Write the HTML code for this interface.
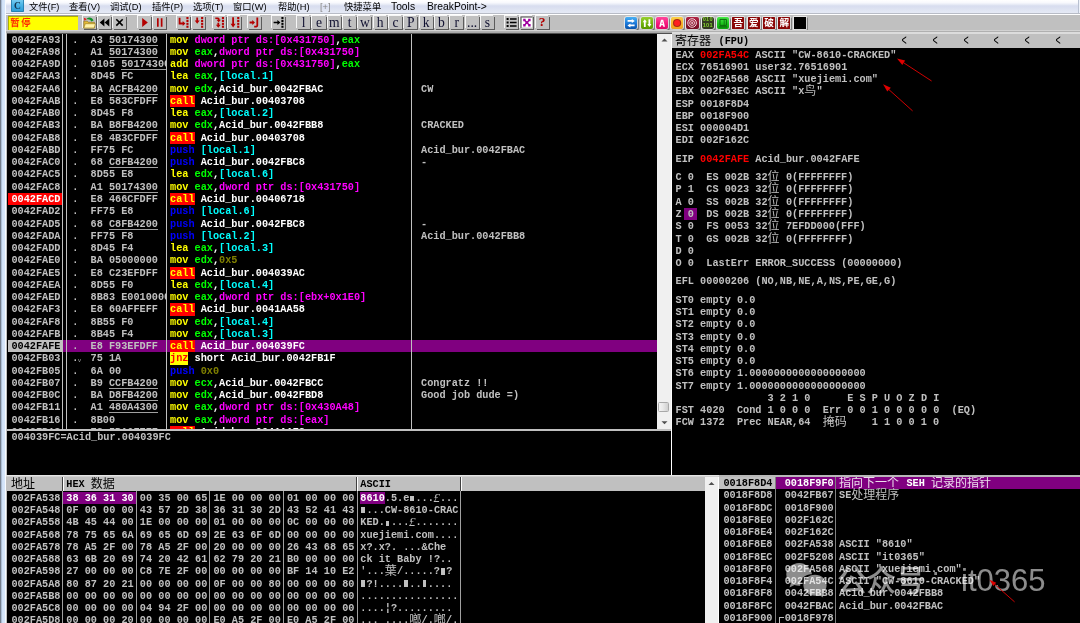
<!DOCTYPE html>
<html><head><meta charset="utf-8"><title>OllyDbg</title>
<style>
html,body{margin:0;padding:0}
body{width:1080px;height:623px;overflow:hidden;background:#c0c0c0;position:relative;font-family:"Liberation Mono","Noto Sans CJK SC",monospace}
#root{position:absolute;left:0;top:0;width:1080px;height:623px;overflow:hidden;will-change:transform;transform:translateZ(0)}
.t{position:absolute;white-space:pre;font:bold 10.22px/12.26px "Liberation Mono","Noto Sans CJK SC",monospace;height:12.26px}
.c{position:absolute;white-space:pre;font:12.02px/12.26px "Liberation Sans","Noto Sans CJK SC",sans-serif;height:12.26px}
.p{position:absolute;white-space:pre;font:italic 13px/12px "Liberation Serif",serif;height:12px;margin-left:-0.3px;margin-top:0px}
.m{position:absolute;white-space:pre;font:9.3px/14px "Liberation Sans","Noto Sans CJK SC",sans-serif;color:#000}
.b{position:absolute;background:#c0c0c0;box-shadow:-1px -1px 0 #f6f6f6, 1px 1px 0 #5c5c5c;overflow:visible}
.i{position:absolute;border-radius:2px;box-shadow:0 0 0 0.8px #f0f0f0, 1.2px 1.2px 0 0.6px #707070;overflow:hidden}
.pane{position:absolute;background:#000;overflow:hidden}
</style></head>
<body>
<div id="root">
<div id="menubar" style="position:absolute;left:0;top:0;width:1080px;height:14px;background:linear-gradient(#ffffff 0%,#f8f9fd 18%,#eaedf7 30%,#dbe0f0 40%,#d8ddef 48%,#dfe4f2 70%,#e7ebf6 100%)"></div>
<div style="position:absolute;left:0;top:13px;width:1080px;height:1px;background:#b8bcc6"></div>
<div style="position:absolute;left:0.00px;top:14.00px;width:1080.00px;height:19.00px;background:#c0c0c0;"></div>
<span class="m" style="left:29px;top:0px;color:#000;">文件(F)</span>
<span class="m" style="left:69px;top:0px;color:#000;">查看(V)</span>
<span class="m" style="left:110px;top:0px;color:#000;">调试(D)</span>
<span class="m" style="left:152px;top:0px;color:#000;">插件(P)</span>
<span class="m" style="left:193px;top:0px;color:#000;">选项(T)</span>
<span class="m" style="left:233px;top:0px;color:#000;">窗口(W)</span>
<span class="m" style="left:278px;top:0px;color:#000;">帮助(H)</span>
<span class="m" style="left:320px;top:0px;color:#888;">[+]</span>
<span class="m" style="left:344px;top:0px;color:#000;">快捷菜单</span>
<span class="m" style="left:391px;top:0px;color:#000;font-size:10.3px;">Tools</span>
<span class="m" style="left:427px;top:0px;color:#000;font-size:10.3px;">BreakPoint-&gt;</span>
<div class="pane" style="left:8px;top:33px;width:650px;height:396px"><span class="t" style="left:3.40px;top:0.60px;color:#c0c0c0;">0042FA93</span><span class="t" style="left:64.13px;top:0.60px;color:#c0c0c0;">.</span><span class="t" style="left:162.00px;top:0.60px;color:#ffff00;">mov </span><span class="t" style="left:186.52px;top:0.60px;color:#ff00ff;">dword ptr ds:[0x431750]</span><span class="t" style="left:327.51px;top:0.60px;color:#ffffff;">,</span><span class="t" style="left:333.64px;top:0.60px;color:#00ff00;">eax</span><span class="t" style="left:3.40px;top:12.86px;color:#c0c0c0;">0042FA98</span><span class="t" style="left:64.13px;top:12.86px;color:#c0c0c0;">.</span><span class="t" style="left:162.00px;top:12.86px;color:#ffff00;">mov </span><span class="t" style="left:186.52px;top:12.86px;color:#00ff00;">eax</span><span class="t" style="left:204.91px;top:12.86px;color:#ffffff;">,</span><span class="t" style="left:211.04px;top:12.86px;color:#ff00ff;">dword ptr ds:[0x431750]</span><span class="t" style="left:3.40px;top:25.12px;color:#c0c0c0;">0042FA9D</span><span class="t" style="left:64.13px;top:25.12px;color:#c0c0c0;">.</span><span class="t" style="left:162.00px;top:25.12px;color:#ffff00;">add </span><span class="t" style="left:186.52px;top:25.12px;color:#ff00ff;">dword ptr ds:[0x431750]</span><span class="t" style="left:327.51px;top:25.12px;color:#ffffff;">,</span><span class="t" style="left:333.64px;top:25.12px;color:#00ff00;">eax</span><span class="t" style="left:3.40px;top:37.38px;color:#c0c0c0;">0042FAA3</span><span class="t" style="left:64.13px;top:37.38px;color:#c0c0c0;">.</span><span class="t" style="left:162.00px;top:37.38px;color:#ffff00;">lea </span><span class="t" style="left:186.52px;top:37.38px;color:#00ff00;">eax</span><span class="t" style="left:204.91px;top:37.38px;color:#ffffff;">,</span><span class="t" style="left:211.04px;top:37.38px;color:#00ffff;">[local.1]</span><span class="t" style="left:3.40px;top:49.64px;color:#c0c0c0;">0042FAA6</span><span class="t" style="left:64.13px;top:49.64px;color:#c0c0c0;">.</span><span class="t" style="left:162.00px;top:49.64px;color:#ffff00;">mov </span><span class="t" style="left:186.52px;top:49.64px;color:#00ff00;">edx</span><span class="t" style="left:204.91px;top:49.64px;color:#ffffff;">,</span><span class="t" style="left:211.04px;top:49.64px;color:#ffffff;">Acid_bur.0042FBAC</span><span class="t" style="left:413.00px;top:49.64px;color:#c0c0c0;">CW</span><span class="t" style="left:3.40px;top:61.90px;color:#c0c0c0;">0042FAAB</span><span class="t" style="left:64.13px;top:61.90px;color:#c0c0c0;">.</span><span class="t" style="left:162.00px;top:61.90px;color:#ffff00;background:#ff0000;">call</span><span class="t" style="left:186.52px;top:61.90px;color:#ffffff;"> Acid_bur.00403708</span><span class="t" style="left:3.40px;top:74.16px;color:#c0c0c0;">0042FAB0</span><span class="t" style="left:64.13px;top:74.16px;color:#c0c0c0;">.</span><span class="t" style="left:162.00px;top:74.16px;color:#ffff00;">lea </span><span class="t" style="left:186.52px;top:74.16px;color:#00ff00;">eax</span><span class="t" style="left:204.91px;top:74.16px;color:#ffffff;">,</span><span class="t" style="left:211.04px;top:74.16px;color:#00ffff;">[local.2]</span><span class="t" style="left:3.40px;top:86.42px;color:#c0c0c0;">0042FAB3</span><span class="t" style="left:64.13px;top:86.42px;color:#c0c0c0;">.</span><span class="t" style="left:162.00px;top:86.42px;color:#ffff00;">mov </span><span class="t" style="left:186.52px;top:86.42px;color:#00ff00;">edx</span><span class="t" style="left:204.91px;top:86.42px;color:#ffffff;">,</span><span class="t" style="left:211.04px;top:86.42px;color:#ffffff;">Acid_bur.0042FBB8</span><span class="t" style="left:413.00px;top:86.42px;color:#c0c0c0;">CRACKED</span><span class="t" style="left:3.40px;top:98.68px;color:#c0c0c0;">0042FAB8</span><span class="t" style="left:64.13px;top:98.68px;color:#c0c0c0;">.</span><span class="t" style="left:162.00px;top:98.68px;color:#ffff00;background:#ff0000;">call</span><span class="t" style="left:186.52px;top:98.68px;color:#ffffff;"> Acid_bur.00403708</span><span class="t" style="left:3.40px;top:110.94px;color:#c0c0c0;">0042FABD</span><span class="t" style="left:64.13px;top:110.94px;color:#c0c0c0;">.</span><span class="t" style="left:162.00px;top:110.94px;color:#0000ff;">push </span><span class="t" style="left:192.65px;top:110.94px;color:#00ffff;">[local.1]</span><span class="t" style="left:413.00px;top:110.94px;color:#c0c0c0;">Acid_bur.0042FBAC</span><span class="t" style="left:3.40px;top:123.20px;color:#c0c0c0;">0042FAC0</span><span class="t" style="left:64.13px;top:123.20px;color:#c0c0c0;">.</span><span class="t" style="left:162.00px;top:123.20px;color:#0000ff;">push </span><span class="t" style="left:192.65px;top:123.20px;color:#ffffff;">Acid_bur.0042FBC8</span><span class="t" style="left:413.00px;top:123.20px;color:#c0c0c0;">-</span><span class="t" style="left:3.40px;top:135.46px;color:#c0c0c0;">0042FAC5</span><span class="t" style="left:64.13px;top:135.46px;color:#c0c0c0;">.</span><span class="t" style="left:162.00px;top:135.46px;color:#ffff00;">lea </span><span class="t" style="left:186.52px;top:135.46px;color:#00ff00;">edx</span><span class="t" style="left:204.91px;top:135.46px;color:#ffffff;">,</span><span class="t" style="left:211.04px;top:135.46px;color:#00ffff;">[local.6]</span><span class="t" style="left:3.40px;top:147.72px;color:#c0c0c0;">0042FAC8</span><span class="t" style="left:64.13px;top:147.72px;color:#c0c0c0;">.</span><span class="t" style="left:162.00px;top:147.72px;color:#ffff00;">mov </span><span class="t" style="left:186.52px;top:147.72px;color:#00ff00;">eax</span><span class="t" style="left:204.91px;top:147.72px;color:#ffffff;">,</span><span class="t" style="left:211.04px;top:147.72px;color:#ff00ff;">dword ptr ds:[0x431750]</span><div style="position:absolute;left:0;top:159.98px;width:54px;height:12.26px;background:#ff0000"></div><span class="t" style="left:3.40px;top:159.98px;color:#fff;">0042FACD</span><span class="t" style="left:64.13px;top:159.98px;color:#c0c0c0;">.</span><span class="t" style="left:162.00px;top:159.98px;color:#ffff00;background:#ff0000;">call</span><span class="t" style="left:186.52px;top:159.98px;color:#ffffff;"> Acid_bur.00406718</span><span class="t" style="left:3.40px;top:172.24px;color:#c0c0c0;">0042FAD2</span><span class="t" style="left:64.13px;top:172.24px;color:#c0c0c0;">.</span><span class="t" style="left:162.00px;top:172.24px;color:#0000ff;">push </span><span class="t" style="left:192.65px;top:172.24px;color:#00ffff;">[local.6]</span><span class="t" style="left:3.40px;top:184.50px;color:#c0c0c0;">0042FAD5</span><span class="t" style="left:64.13px;top:184.50px;color:#c0c0c0;">.</span><span class="t" style="left:162.00px;top:184.50px;color:#0000ff;">push </span><span class="t" style="left:192.65px;top:184.50px;color:#ffffff;">Acid_bur.0042FBC8</span><span class="t" style="left:413.00px;top:184.50px;color:#c0c0c0;">-</span><span class="t" style="left:3.40px;top:196.76px;color:#c0c0c0;">0042FADA</span><span class="t" style="left:64.13px;top:196.76px;color:#c0c0c0;">.</span><span class="t" style="left:162.00px;top:196.76px;color:#0000ff;">push </span><span class="t" style="left:192.65px;top:196.76px;color:#00ffff;">[local.2]</span><span class="t" style="left:413.00px;top:196.76px;color:#c0c0c0;">Acid_bur.0042FBB8</span><span class="t" style="left:3.40px;top:209.02px;color:#c0c0c0;">0042FADD</span><span class="t" style="left:64.13px;top:209.02px;color:#c0c0c0;">.</span><span class="t" style="left:162.00px;top:209.02px;color:#ffff00;">lea </span><span class="t" style="left:186.52px;top:209.02px;color:#00ff00;">eax</span><span class="t" style="left:204.91px;top:209.02px;color:#ffffff;">,</span><span class="t" style="left:211.04px;top:209.02px;color:#00ffff;">[local.3]</span><span class="t" style="left:3.40px;top:221.28px;color:#c0c0c0;">0042FAE0</span><span class="t" style="left:64.13px;top:221.28px;color:#c0c0c0;">.</span><span class="t" style="left:162.00px;top:221.28px;color:#ffff00;">mov </span><span class="t" style="left:186.52px;top:221.28px;color:#00ff00;">edx</span><span class="t" style="left:204.91px;top:221.28px;color:#ffffff;">,</span><span class="t" style="left:211.04px;top:221.28px;color:#808000;">0x5</span><span class="t" style="left:3.40px;top:233.54px;color:#c0c0c0;">0042FAE5</span><span class="t" style="left:64.13px;top:233.54px;color:#c0c0c0;">.</span><span class="t" style="left:162.00px;top:233.54px;color:#ffff00;background:#ff0000;">call</span><span class="t" style="left:186.52px;top:233.54px;color:#ffffff;"> Acid_bur.004039AC</span><span class="t" style="left:3.40px;top:245.80px;color:#c0c0c0;">0042FAEA</span><span class="t" style="left:64.13px;top:245.80px;color:#c0c0c0;">.</span><span class="t" style="left:162.00px;top:245.80px;color:#ffff00;">lea </span><span class="t" style="left:186.52px;top:245.80px;color:#00ff00;">edx</span><span class="t" style="left:204.91px;top:245.80px;color:#ffffff;">,</span><span class="t" style="left:211.04px;top:245.80px;color:#00ffff;">[local.4]</span><span class="t" style="left:3.40px;top:258.06px;color:#c0c0c0;">0042FAED</span><span class="t" style="left:64.13px;top:258.06px;color:#c0c0c0;">.</span><span class="t" style="left:162.00px;top:258.06px;color:#ffff00;">mov </span><span class="t" style="left:186.52px;top:258.06px;color:#00ff00;">eax</span><span class="t" style="left:204.91px;top:258.06px;color:#ffffff;">,</span><span class="t" style="left:211.04px;top:258.06px;color:#ff00ff;">dword ptr ds:[ebx+0x1E0]</span><span class="t" style="left:3.40px;top:270.32px;color:#c0c0c0;">0042FAF3</span><span class="t" style="left:64.13px;top:270.32px;color:#c0c0c0;">.</span><span class="t" style="left:162.00px;top:270.32px;color:#ffff00;background:#ff0000;">call</span><span class="t" style="left:186.52px;top:270.32px;color:#ffffff;"> Acid_bur.0041AA58</span><span class="t" style="left:3.40px;top:282.58px;color:#c0c0c0;">0042FAF8</span><span class="t" style="left:64.13px;top:282.58px;color:#c0c0c0;">.</span><span class="t" style="left:162.00px;top:282.58px;color:#ffff00;">mov </span><span class="t" style="left:186.52px;top:282.58px;color:#00ff00;">edx</span><span class="t" style="left:204.91px;top:282.58px;color:#ffffff;">,</span><span class="t" style="left:211.04px;top:282.58px;color:#00ffff;">[local.4]</span><span class="t" style="left:3.40px;top:294.84px;color:#c0c0c0;">0042FAFB</span><span class="t" style="left:64.13px;top:294.84px;color:#c0c0c0;">.</span><span class="t" style="left:162.00px;top:294.84px;color:#ffff00;">mov </span><span class="t" style="left:186.52px;top:294.84px;color:#00ff00;">eax</span><span class="t" style="left:204.91px;top:294.84px;color:#ffffff;">,</span><span class="t" style="left:211.04px;top:294.84px;color:#00ffff;">[local.3]</span><div style="position:absolute;left:0;top:307.10px;width:54px;height:12.26px;background:#c0c0c0"></div><div style="position:absolute;left:54.5px;top:307.10px;width:596px;height:12.26px;background:#800080"></div><span class="t" style="left:3.40px;top:307.10px;color:#000;">0042FAFE</span><span class="t" style="left:64.13px;top:307.10px;color:#c0c0c0;">.</span><span class="t" style="left:162.00px;top:307.10px;color:#ffff00;background:#ff0000;">call</span><span class="t" style="left:186.52px;top:307.10px;color:#ffffff;"> Acid_bur.004039FC</span><span class="t" style="left:3.40px;top:319.36px;color:#c0c0c0;">0042FB03</span><span class="t" style="left:64.13px;top:319.36px;color:#c0c0c0;">.</span><span style="position:absolute;left:70.00px;top:323.96px;font:6px/7px 'Liberation Sans',sans-serif;color:#a0a0a0">v</span><span class="t" style="left:162.00px;top:319.36px;color:#ff0000;background:#ffff00;">jnz</span><span class="t" style="left:180.39px;top:319.36px;color:#ffffff;"> short Acid_bur.0042FB1F</span><span class="t" style="left:3.40px;top:331.62px;color:#c0c0c0;">0042FB05</span><span class="t" style="left:64.13px;top:331.62px;color:#c0c0c0;">.</span><span class="t" style="left:162.00px;top:331.62px;color:#0000ff;">push </span><span class="t" style="left:192.65px;top:331.62px;color:#808000;">0x0</span><span class="t" style="left:3.40px;top:343.88px;color:#c0c0c0;">0042FB07</span><span class="t" style="left:64.13px;top:343.88px;color:#c0c0c0;">.</span><span class="t" style="left:162.00px;top:343.88px;color:#ffff00;">mov </span><span class="t" style="left:186.52px;top:343.88px;color:#00ff00;">ecx</span><span class="t" style="left:204.91px;top:343.88px;color:#ffffff;">,</span><span class="t" style="left:211.04px;top:343.88px;color:#ffffff;">Acid_bur.0042FBCC</span><span class="t" style="left:413.00px;top:343.88px;color:#c0c0c0;">Congratz !!</span><span class="t" style="left:3.40px;top:356.14px;color:#c0c0c0;">0042FB0C</span><span class="t" style="left:64.13px;top:356.14px;color:#c0c0c0;">.</span><span class="t" style="left:162.00px;top:356.14px;color:#ffff00;">mov </span><span class="t" style="left:186.52px;top:356.14px;color:#00ff00;">edx</span><span class="t" style="left:204.91px;top:356.14px;color:#ffffff;">,</span><span class="t" style="left:211.04px;top:356.14px;color:#ffffff;">Acid_bur.0042FBD8</span><span class="t" style="left:413.00px;top:356.14px;color:#c0c0c0;">Good job dude =)</span><span class="t" style="left:3.40px;top:368.40px;color:#c0c0c0;">0042FB11</span><span class="t" style="left:64.13px;top:368.40px;color:#c0c0c0;">.</span><span class="t" style="left:162.00px;top:368.40px;color:#ffff00;">mov </span><span class="t" style="left:186.52px;top:368.40px;color:#00ff00;">eax</span><span class="t" style="left:204.91px;top:368.40px;color:#ffffff;">,</span><span class="t" style="left:211.04px;top:368.40px;color:#ff00ff;">dword ptr ds:[0x430A48]</span><span class="t" style="left:3.40px;top:380.66px;color:#c0c0c0;">0042FB16</span><span class="t" style="left:64.13px;top:380.66px;color:#c0c0c0;">.</span><span class="t" style="left:162.00px;top:380.66px;color:#ffff00;">mov </span><span class="t" style="left:186.52px;top:380.66px;color:#00ff00;">eax</span><span class="t" style="left:204.91px;top:380.66px;color:#ffffff;">,</span><span class="t" style="left:211.04px;top:380.66px;color:#ff00ff;">dword ptr ds:[eax]</span><span class="t" style="left:3.40px;top:392.92px;color:#c0c0c0;">0042FB18</span><span class="t" style="left:64.13px;top:392.92px;color:#c0c0c0;">.</span><span class="t" style="left:162.00px;top:392.92px;color:#ffff00;background:#ff0000;">call</span><span class="t" style="left:186.52px;top:392.92px;color:#ffffff;"> Acid_bur.0041A178</span><div style="position:absolute;left:0;top:0;width:158.5px;height:396px;overflow:hidden"><span class="t" style="left:82.52px;top:0.60px;color:#c0c0c0;">A3 </span><span class="t" style="left:100.91px;top:0.60px;color:#c0c0c0;border-bottom:1px solid #a0a0a0;height:11.06px">50174300</span><span class="t" style="left:82.52px;top:12.86px;color:#c0c0c0;">A1 </span><span class="t" style="left:100.91px;top:12.86px;color:#c0c0c0;border-bottom:1px solid #a0a0a0;height:11.06px">50174300</span><span class="t" style="left:82.52px;top:25.12px;color:#c0c0c0;">0105 </span><span class="t" style="left:113.17px;top:25.12px;color:#c0c0c0;border-bottom:1px solid #a0a0a0;height:11.06px">50174300</span><span class="t" style="left:82.52px;top:37.38px;color:#c0c0c0;">8D45 FC</span><span class="t" style="left:82.52px;top:49.64px;color:#c0c0c0;">BA </span><span class="t" style="left:100.91px;top:49.64px;color:#c0c0c0;border-bottom:1px solid #a0a0a0;height:11.06px">ACFB4200</span><span class="t" style="left:82.52px;top:61.90px;color:#c0c0c0;">E8 583CFDFF</span><span class="t" style="left:82.52px;top:74.16px;color:#c0c0c0;">8D45 F8</span><span class="t" style="left:82.52px;top:86.42px;color:#c0c0c0;">BA </span><span class="t" style="left:100.91px;top:86.42px;color:#c0c0c0;border-bottom:1px solid #a0a0a0;height:11.06px">B8FB4200</span><span class="t" style="left:82.52px;top:98.68px;color:#c0c0c0;">E8 4B3CFDFF</span><span class="t" style="left:82.52px;top:110.94px;color:#c0c0c0;">FF75 FC</span><span class="t" style="left:82.52px;top:123.20px;color:#c0c0c0;">68 </span><span class="t" style="left:100.91px;top:123.20px;color:#c0c0c0;border-bottom:1px solid #a0a0a0;height:11.06px">C8FB4200</span><span class="t" style="left:82.52px;top:135.46px;color:#c0c0c0;">8D55 E8</span><span class="t" style="left:82.52px;top:147.72px;color:#c0c0c0;">A1 </span><span class="t" style="left:100.91px;top:147.72px;color:#c0c0c0;border-bottom:1px solid #a0a0a0;height:11.06px">50174300</span><span class="t" style="left:82.52px;top:159.98px;color:#c0c0c0;">E8 466CFDFF</span><span class="t" style="left:82.52px;top:172.24px;color:#c0c0c0;">FF75 E8</span><span class="t" style="left:82.52px;top:184.50px;color:#c0c0c0;">68 </span><span class="t" style="left:100.91px;top:184.50px;color:#c0c0c0;border-bottom:1px solid #a0a0a0;height:11.06px">C8FB4200</span><span class="t" style="left:82.52px;top:196.76px;color:#c0c0c0;">FF75 F8</span><span class="t" style="left:82.52px;top:209.02px;color:#c0c0c0;">8D45 F4</span><span class="t" style="left:82.52px;top:221.28px;color:#c0c0c0;">BA 05000000</span><span class="t" style="left:82.52px;top:233.54px;color:#c0c0c0;">E8 C23EFDFF</span><span class="t" style="left:82.52px;top:245.80px;color:#c0c0c0;">8D55 F0</span><span class="t" style="left:82.52px;top:258.06px;color:#c0c0c0;">8B83 E0010000</span><span class="t" style="left:82.52px;top:270.32px;color:#c0c0c0;">E8 60AFFEFF</span><span class="t" style="left:82.52px;top:282.58px;color:#c0c0c0;">8B55 F0</span><span class="t" style="left:82.52px;top:294.84px;color:#c0c0c0;">8B45 F4</span><span class="t" style="left:82.52px;top:307.10px;color:#c0c0c0;">E8 F93EFDFF</span><span class="t" style="left:82.52px;top:319.36px;color:#c0c0c0;">75 1A</span><span class="t" style="left:82.52px;top:331.62px;color:#c0c0c0;">6A 00</span><span class="t" style="left:82.52px;top:343.88px;color:#c0c0c0;">B9 </span><span class="t" style="left:100.91px;top:343.88px;color:#c0c0c0;border-bottom:1px solid #a0a0a0;height:11.06px">CCFB4200</span><span class="t" style="left:82.52px;top:356.14px;color:#c0c0c0;">BA </span><span class="t" style="left:100.91px;top:356.14px;color:#c0c0c0;border-bottom:1px solid #a0a0a0;height:11.06px">D8FB4200</span><span class="t" style="left:82.52px;top:368.40px;color:#c0c0c0;">A1 </span><span class="t" style="left:100.91px;top:368.40px;color:#c0c0c0;border-bottom:1px solid #a0a0a0;height:11.06px">480A4300</span><span class="t" style="left:82.52px;top:380.66px;color:#c0c0c0;">8B00</span><span class="t" style="left:82.52px;top:392.92px;color:#c0c0c0;">E8 5BA6FEFF</span></div><div style="position:absolute;left:54px;top:0;width:1px;height:396px;background:#c0c0c0"></div><div style="position:absolute;left:58px;top:0;width:1px;height:396px;background:#c0c0c0"></div><div style="position:absolute;left:158px;top:0;width:1px;height:396px;background:#c0c0c0"></div><div style="position:absolute;left:403px;top:0;width:1px;height:396px;background:#c0c0c0"></div></div>
<div class="pane" style="left:8px;top:431px;width:663px;height:44px"></div>
<div class="pane" style="left:672px;top:48px;width:408px;height:427px"></div>
<div class="pane" style="left:8px;top:491px;width:697px;height:132px"></div>
<div class="pane" style="left:719px;top:477px;width:361px;height:146px"></div>
<span class="t" style="left:11.40px;top:431.20px;color:#c0c0c0;">004039FC=Acid_bur.004039FC</span>
<div style="position:absolute;left:672.00px;top:34.00px;width:408.00px;height:14.00px;background:#c0c0c0;"></div>
<span class="c" style="left:675px;top:34.5px;color:#000">寄存器</span>
<span class="t" style="left:718.51px;top:35.00px;color:#000;">(FPU)</span>
<span class="t" style="left:901.30px;top:35.40px;color:#000;font-weight:normal;transform:scale(0.85,1.45);transform-origin:50% 55%">&lt;</span>
<span class="t" style="left:931.95px;top:35.40px;color:#000;font-weight:normal;transform:scale(0.85,1.45);transform-origin:50% 55%">&lt;</span>
<span class="t" style="left:962.60px;top:35.40px;color:#000;font-weight:normal;transform:scale(0.85,1.45);transform-origin:50% 55%">&lt;</span>
<span class="t" style="left:993.25px;top:35.40px;color:#000;font-weight:normal;transform:scale(0.85,1.45);transform-origin:50% 55%">&lt;</span>
<span class="t" style="left:1023.90px;top:35.40px;color:#000;font-weight:normal;transform:scale(0.85,1.45);transform-origin:50% 55%">&lt;</span>
<span class="t" style="left:1054.55px;top:35.40px;color:#000;font-weight:normal;transform:scale(0.85,1.45);transform-origin:50% 55%">&lt;</span>
<div style="position:absolute;left:684.20px;top:207.68px;width:12.50px;height:12.26px;background:#800080;"></div>
<span class="t" style="left:675.60px;top:48.60px;color:#c0c0c0;">EAX </span>
<span class="t" style="left:700.12px;top:48.60px;color:#ff0000;">002FA54C</span>
<span class="t" style="left:749.16px;top:48.60px;color:#c0c0c0;"> ASCII "CW-8610-CRACKED"</span>
<span class="t" style="left:675.60px;top:60.86px;color:#c0c0c0;">ECX 76516901 user32.76516901</span>
<span class="t" style="left:675.60px;top:73.12px;color:#c0c0c0;">EDX 002FA568 ASCII "xuejiemi.com"</span>
<span class="t" style="left:675.60px;top:85.38px;color:#c0c0c0;">EBX 002F63EC ASCII "x</span>
<span class="c" style="left:804.33px;top:85.38px;color:#c0c0c0;">鸟</span>
<span class="t" style="left:816.59px;top:85.38px;color:#c0c0c0;">"</span>
<span class="t" style="left:675.60px;top:97.64px;color:#c0c0c0;">ESP 0018F8D4</span>
<span class="t" style="left:675.60px;top:109.90px;color:#c0c0c0;">EBP 0018F900</span>
<span class="t" style="left:675.60px;top:122.16px;color:#c0c0c0;">ESI 000004D1</span>
<span class="t" style="left:675.60px;top:134.42px;color:#c0c0c0;">EDI 002F162C</span>
<span class="t" style="left:675.60px;top:152.81px;color:#c0c0c0;">EIP </span>
<span class="t" style="left:700.12px;top:152.81px;color:#ff0000;">0042FAFE</span>
<span class="t" style="left:749.16px;top:152.81px;color:#c0c0c0;"> Acid_bur.0042FAFE</span>
<span class="t" style="left:675.60px;top:171.20px;color:#c0c0c0;">C 0  ES 002B 32</span>
<span class="c" style="left:767.55px;top:171.20px;color:#c0c0c0;">位</span>
<span class="t" style="left:779.81px;top:171.20px;color:#c0c0c0;"> 0(FFFFFFFF)</span>
<span class="t" style="left:675.60px;top:183.46px;color:#c0c0c0;">P 1  CS 0023 32</span>
<span class="c" style="left:767.55px;top:183.46px;color:#c0c0c0;">位</span>
<span class="t" style="left:779.81px;top:183.46px;color:#c0c0c0;"> 0(FFFFFFFF)</span>
<span class="t" style="left:675.60px;top:195.72px;color:#c0c0c0;">A 0  SS 002B 32</span>
<span class="c" style="left:767.55px;top:195.72px;color:#c0c0c0;">位</span>
<span class="t" style="left:779.81px;top:195.72px;color:#c0c0c0;"> 0(FFFFFFFF)</span>
<span class="t" style="left:675.60px;top:207.98px;color:#c0c0c0;">Z 0  DS 002B 32</span>
<span class="c" style="left:767.55px;top:207.98px;color:#c0c0c0;">位</span>
<span class="t" style="left:779.81px;top:207.98px;color:#c0c0c0;"> 0(FFFFFFFF)</span>
<span class="t" style="left:675.60px;top:220.24px;color:#c0c0c0;">S 0  FS 0053 32</span>
<span class="c" style="left:767.55px;top:220.24px;color:#c0c0c0;">位</span>
<span class="t" style="left:779.81px;top:220.24px;color:#c0c0c0;"> 7EFDD000(FFF)</span>
<span class="t" style="left:675.60px;top:232.50px;color:#c0c0c0;">T 0  GS 002B 32</span>
<span class="c" style="left:767.55px;top:232.50px;color:#c0c0c0;">位</span>
<span class="t" style="left:779.81px;top:232.50px;color:#c0c0c0;"> 0(FFFFFFFF)</span>
<span class="t" style="left:675.60px;top:244.76px;color:#c0c0c0;">D 0</span>
<span class="t" style="left:675.60px;top:257.02px;color:#c0c0c0;">O 0  LastErr ERROR_SUCCESS (00000000)</span>
<span class="t" style="left:675.60px;top:275.41px;color:#c0c0c0;">EFL 00000206 (NO,NB,NE,A,NS,PE,GE,G)</span>
<span class="t" style="left:675.60px;top:293.80px;color:#c0c0c0;">ST0 empty 0.0</span>
<span class="t" style="left:675.60px;top:306.06px;color:#c0c0c0;">ST1 empty 0.0</span>
<span class="t" style="left:675.60px;top:318.32px;color:#c0c0c0;">ST2 empty 0.0</span>
<span class="t" style="left:675.60px;top:330.58px;color:#c0c0c0;">ST3 empty 0.0</span>
<span class="t" style="left:675.60px;top:342.84px;color:#c0c0c0;">ST4 empty 0.0</span>
<span class="t" style="left:675.60px;top:355.10px;color:#c0c0c0;">ST5 empty 0.0</span>
<span class="t" style="left:675.60px;top:367.36px;color:#c0c0c0;">ST6 empty 1.0000000000000000000</span>
<span class="t" style="left:675.60px;top:379.62px;color:#c0c0c0;">ST7 empty 1.0000000000000000000</span>
<span class="t" style="left:675.60px;top:391.88px;color:#c0c0c0;">               3 2 1 0      E S P U O Z D I</span>
<span class="t" style="left:675.60px;top:404.14px;color:#c0c0c0;">FST 4020  Cond 1 0 0 0  Err 0 0 1 0 0 0 0 0  (EQ)</span>
<span class="t" style="left:675.60px;top:416.40px;color:#c0c0c0;">FCW 1372  Prec NEAR,64  </span>
<span class="c" style="left:822.72px;top:416.40px;color:#c0c0c0;">掩码</span>
<span class="t" style="left:847.24px;top:416.40px;color:#c0c0c0;">    1 1 0 0 1 0</span>
<div style="position:absolute;left:8.00px;top:477.00px;width:697.00px;height:14.00px;background:#c0c0c0;"></div>
<span class="c" style="left:11px;top:477.5px;color:#000">地址</span>
<span class="t" style="left:66.30px;top:478.20px;color:#000;">HEX</span>
<span class="c" style="left:90.82px;top:477.5px;color:#000">数据</span>
<span class="t" style="left:360.30px;top:478.20px;color:#000;">ASCII</span>
<div style="position:absolute;left:62.00px;top:477.00px;width:1.00px;height:14.00px;background:#404040;"></div>
<div style="position:absolute;left:63.00px;top:477.00px;width:1.00px;height:14.00px;background:#ffffff;"></div>
<div style="position:absolute;left:356.00px;top:477.00px;width:1.00px;height:14.00px;background:#404040;"></div>
<div style="position:absolute;left:357.00px;top:477.00px;width:1.00px;height:14.00px;background:#ffffff;"></div>
<div style="position:absolute;left:460.00px;top:477.00px;width:1.00px;height:14.00px;background:#404040;"></div>
<div style="position:absolute;left:461.00px;top:477.00px;width:1.00px;height:14.00px;background:#ffffff;"></div>
<span class="t" style="left:11.40px;top:491.80px;color:#c0c0c0;">002FA538</span>
<div style="position:absolute;left:63.00px;top:491.50px;width:73.00px;height:12.26px;background:#800080;"></div>
<span class="t" style="left:66.30px;top:491.80px;color:#ffffff;">38 36 31 30</span>
<span class="t" style="left:139.86px;top:491.80px;color:#c0c0c0;">00 35 00 65</span>
<span class="t" style="left:213.42px;top:491.80px;color:#c0c0c0;">1E 00 00 00</span>
<span class="t" style="left:286.98px;top:491.80px;color:#c0c0c0;">01 00 00 00</span>
<span class="t" style="left:360.30px;top:491.80px;color:#ffffff;background:#800080;">8610</span>
<span class="t" style="left:384.82px;top:491.80px;color:#c0c0c0;">.5.e ...</span>
<span style="position:absolute;left:410.24px;top:496.00px;width:3.7px;height:5.2px;background:#c0c0c0;color:#c0c0c0;font:4px/5px 'Liberation Mono',monospace;overflow:hidden">▪</span>
<span class="p" style="left:433.86px;top:491.80px;color:#c0c0c0;">£</span>
<span class="t" style="left:439.99px;top:491.80px;color:#c0c0c0;">...</span>
<span class="t" style="left:11.40px;top:504.06px;color:#c0c0c0;">002FA548</span>
<span class="t" style="left:66.30px;top:504.06px;color:#c0c0c0;">0F 00 00 00</span>
<span class="t" style="left:139.86px;top:504.06px;color:#c0c0c0;">43 57 2D 38</span>
<span class="t" style="left:213.42px;top:504.06px;color:#c0c0c0;">36 31 30 2D</span>
<span class="t" style="left:286.98px;top:504.06px;color:#c0c0c0;">43 52 41 43</span>
<span class="t" style="left:360.30px;top:504.06px;color:#c0c0c0;"> ...CW-8610-CRAC</span>
<span style="position:absolute;left:361.20px;top:506.66px;width:3.7px;height:6.8px;background:#c0c0c0;color:#c0c0c0;font:4px/5px 'Liberation Mono',monospace;overflow:hidden">▮</span>
<span class="t" style="left:11.40px;top:516.32px;color:#c0c0c0;">002FA558</span>
<span class="t" style="left:66.30px;top:516.32px;color:#c0c0c0;">4B 45 44 00</span>
<span class="t" style="left:139.86px;top:516.32px;color:#c0c0c0;">1E 00 00 00</span>
<span class="t" style="left:213.42px;top:516.32px;color:#c0c0c0;">01 00 00 00</span>
<span class="t" style="left:286.98px;top:516.32px;color:#c0c0c0;">0C 00 00 00</span>
<span class="t" style="left:360.30px;top:516.32px;color:#c0c0c0;">KED. ...</span>
<span style="position:absolute;left:385.72px;top:520.52px;width:3.7px;height:5.2px;background:#c0c0c0;color:#c0c0c0;font:4px/5px 'Liberation Mono',monospace;overflow:hidden">▪</span>
<span class="p" style="left:409.34px;top:516.32px;color:#c0c0c0;">£</span>
<span class="t" style="left:415.47px;top:516.32px;color:#c0c0c0;">.......</span>
<span class="t" style="left:11.40px;top:528.58px;color:#c0c0c0;">002FA568</span>
<span class="t" style="left:66.30px;top:528.58px;color:#c0c0c0;">78 75 65 6A</span>
<span class="t" style="left:139.86px;top:528.58px;color:#c0c0c0;">69 65 6D 69</span>
<span class="t" style="left:213.42px;top:528.58px;color:#c0c0c0;">2E 63 6F 6D</span>
<span class="t" style="left:286.98px;top:528.58px;color:#c0c0c0;">00 00 00 00</span>
<span class="t" style="left:360.30px;top:528.58px;color:#c0c0c0;">xuejiemi.com....</span>
<span class="t" style="left:11.40px;top:540.84px;color:#c0c0c0;">002FA578</span>
<span class="t" style="left:66.30px;top:540.84px;color:#c0c0c0;">78 A5 2F 00</span>
<span class="t" style="left:139.86px;top:540.84px;color:#c0c0c0;">78 A5 2F 00</span>
<span class="t" style="left:213.42px;top:540.84px;color:#c0c0c0;">20 00 00 00</span>
<span class="t" style="left:286.98px;top:540.84px;color:#c0c0c0;">26 43 68 65</span>
<span class="t" style="left:360.30px;top:540.84px;color:#c0c0c0;">x?.x?. ...&amp;Che</span>
<span class="t" style="left:11.40px;top:553.10px;color:#c0c0c0;">002FA588</span>
<span class="t" style="left:66.30px;top:553.10px;color:#c0c0c0;">63 6B 20 69</span>
<span class="t" style="left:139.86px;top:553.10px;color:#c0c0c0;">74 20 42 61</span>
<span class="t" style="left:213.42px;top:553.10px;color:#c0c0c0;">62 79 20 21</span>
<span class="t" style="left:286.98px;top:553.10px;color:#c0c0c0;">B0 00 00 00</span>
<span class="t" style="left:360.30px;top:553.10px;color:#c0c0c0;">ck it Baby !?..</span>
<span class="t" style="left:11.40px;top:565.36px;color:#c0c0c0;">002FA598</span>
<span class="t" style="left:66.30px;top:565.36px;color:#c0c0c0;">27 00 00 00</span>
<span class="t" style="left:139.86px;top:565.36px;color:#c0c0c0;">C8 7E 2F 00</span>
<span class="t" style="left:213.42px;top:565.36px;color:#c0c0c0;">00 00 00 00</span>
<span class="t" style="left:286.98px;top:565.36px;color:#c0c0c0;">BF 14 10 E2</span>
<span class="t" style="left:360.30px;top:565.36px;color:#c0c0c0;">'...</span>
<span class="c" style="left:384.82px;top:565.36px;color:#c0c0c0;">葉</span>
<span class="t" style="left:397.08px;top:565.36px;color:#c0c0c0;">/.....? ?</span>
<span style="position:absolute;left:440.89px;top:567.96px;width:3.7px;height:6.8px;background:#c0c0c0;color:#c0c0c0;font:4px/5px 'Liberation Mono',monospace;overflow:hidden">▮</span>
<span class="t" style="left:11.40px;top:577.62px;color:#c0c0c0;">002FA5A8</span>
<span class="t" style="left:66.30px;top:577.62px;color:#c0c0c0;">80 87 20 21</span>
<span class="t" style="left:139.86px;top:577.62px;color:#c0c0c0;">00 00 00 00</span>
<span class="t" style="left:213.42px;top:577.62px;color:#c0c0c0;">0F 00 00 80</span>
<span class="t" style="left:286.98px;top:577.62px;color:#c0c0c0;">00 00 00 80</span>
<span class="t" style="left:360.30px;top:577.62px;color:#c0c0c0;"> ?!.... .. ....</span>
<span style="position:absolute;left:361.20px;top:580.22px;width:3.7px;height:6.8px;background:#c0c0c0;color:#c0c0c0;font:4px/5px 'Liberation Mono',monospace;overflow:hidden">▮</span>
<span style="position:absolute;left:404.11px;top:580.22px;width:3.7px;height:6.8px;background:#c0c0c0;color:#c0c0c0;font:4px/5px 'Liberation Mono',monospace;overflow:hidden">▮</span>
<span style="position:absolute;left:422.50px;top:580.22px;width:3.7px;height:6.8px;background:#c0c0c0;color:#c0c0c0;font:4px/5px 'Liberation Mono',monospace;overflow:hidden">▮</span>
<span class="t" style="left:11.40px;top:589.88px;color:#c0c0c0;">002FA5B8</span>
<span class="t" style="left:66.30px;top:589.88px;color:#c0c0c0;">00 00 00 00</span>
<span class="t" style="left:139.86px;top:589.88px;color:#c0c0c0;">00 00 00 00</span>
<span class="t" style="left:213.42px;top:589.88px;color:#c0c0c0;">00 00 00 00</span>
<span class="t" style="left:286.98px;top:589.88px;color:#c0c0c0;">00 00 00 00</span>
<span class="t" style="left:360.30px;top:589.88px;color:#c0c0c0;">................</span>
<span class="t" style="left:11.40px;top:602.14px;color:#c0c0c0;">002FA5C8</span>
<span class="t" style="left:66.30px;top:602.14px;color:#c0c0c0;">00 00 00 00</span>
<span class="t" style="left:139.86px;top:602.14px;color:#c0c0c0;">04 94 2F 00</span>
<span class="t" style="left:213.42px;top:602.14px;color:#c0c0c0;">00 00 00 00</span>
<span class="t" style="left:286.98px;top:602.14px;color:#c0c0c0;">00 00 00 00</span>
<span class="t" style="left:360.30px;top:602.14px;color:#c0c0c0;">....¦?.........</span>
<span class="t" style="left:11.40px;top:614.40px;color:#c0c0c0;">002FA5D8</span>
<span class="t" style="left:66.30px;top:614.40px;color:#c0c0c0;">00 00 00 20</span>
<span class="t" style="left:139.86px;top:614.40px;color:#c0c0c0;">00 00 00 00</span>
<span class="t" style="left:213.42px;top:614.40px;color:#c0c0c0;">E0 A5 2F 00</span>
<span class="t" style="left:286.98px;top:614.40px;color:#c0c0c0;">E0 A5 2F 00</span>
<span class="t" style="left:360.30px;top:614.40px;color:#c0c0c0;">... ....</span>
<span class="c" style="left:409.34px;top:614.40px;color:#c0c0c0;">啷</span>
<span class="t" style="left:421.60px;top:614.40px;color:#c0c0c0;">/.</span>
<span class="c" style="left:433.86px;top:614.40px;color:#c0c0c0;">啷</span>
<span class="t" style="left:446.12px;top:614.40px;color:#c0c0c0;">/.</span>
<div style="position:absolute;left:62.00px;top:491.00px;width:1.00px;height:132.00px;background:#a0a0a0;"></div>
<div style="position:absolute;left:135.50px;top:491.00px;width:1.00px;height:132.00px;background:#a0a0a0;"></div>
<div style="position:absolute;left:209.00px;top:491.00px;width:1.00px;height:132.00px;background:#a0a0a0;"></div>
<div style="position:absolute;left:282.50px;top:491.00px;width:1.00px;height:132.00px;background:#a0a0a0;"></div>
<div style="position:absolute;left:356.50px;top:491.00px;width:1.00px;height:132.00px;background:#a0a0a0;"></div>
<div style="position:absolute;left:460.00px;top:491.00px;width:1.00px;height:132.00px;background:#a0a0a0;"></div>
<div style="position:absolute;left:719.00px;top:477.00px;width:55.50px;height:12.26px;background:#c0c0c0;"></div>
<div style="position:absolute;left:774.50px;top:477.00px;width:305.50px;height:12.26px;background:#800080;"></div>
<span class="t" style="left:723.40px;top:477.00px;color:#000;">0018F8D4</span>
<span class="t" style="left:784.70px;top:477.00px;color:#ffffff;">0018F9F0</span>
<span class="c" style="left:839.00px;top:477.00px;color:#ecdcec;">指向下一个</span>
<span class="t" style="left:900.30px;top:477.00px;color:#ffffff;"> SEH </span>
<span class="c" style="left:930.95px;top:477.00px;color:#ecdcec;">记录的指针</span>
<span class="t" style="left:723.40px;top:489.26px;color:#c0c0c0;">0018F8D8</span>
<span class="t" style="left:784.70px;top:489.26px;color:#c0c0c0;">0042FB67</span>
<span class="t" style="left:839.00px;top:489.26px;color:#c0c0c0;">SE</span>
<span class="c" style="left:851.26px;top:489.26px;color:#c0c0c0;">处理程序</span>
<span class="t" style="left:723.40px;top:501.52px;color:#c0c0c0;">0018F8DC</span>
<span class="t" style="left:784.70px;top:501.52px;color:#c0c0c0;">0018F900</span>
<span class="t" style="left:723.40px;top:513.78px;color:#c0c0c0;">0018F8E0</span>
<span class="t" style="left:784.70px;top:513.78px;color:#c0c0c0;">002F162C</span>
<span class="t" style="left:723.40px;top:526.04px;color:#c0c0c0;">0018F8E4</span>
<span class="t" style="left:784.70px;top:526.04px;color:#c0c0c0;">002F162C</span>
<span class="t" style="left:723.40px;top:538.30px;color:#c0c0c0;">0018F8E8</span>
<span class="t" style="left:784.70px;top:538.30px;color:#c0c0c0;">002FA538</span>
<span class="t" style="left:839.00px;top:538.30px;color:#c0c0c0;">ASCII "8610"</span>
<span class="t" style="left:723.40px;top:550.56px;color:#c0c0c0;">0018F8EC</span>
<span class="t" style="left:784.70px;top:550.56px;color:#c0c0c0;">002F5208</span>
<span class="t" style="left:839.00px;top:550.56px;color:#c0c0c0;">ASCII "it0365"</span>
<span class="t" style="left:723.40px;top:562.82px;color:#c0c0c0;">0018F8F0</span>
<span class="t" style="left:784.70px;top:562.82px;color:#c0c0c0;">002FA568</span>
<span class="t" style="left:839.00px;top:562.82px;color:#c0c0c0;">ASCII "xuejiemi.com"</span>
<span class="t" style="left:723.40px;top:575.08px;color:#c0c0c0;">0018F8F4</span>
<span class="t" style="left:784.70px;top:575.08px;color:#c0c0c0;">002FA54C</span>
<span class="t" style="left:839.00px;top:575.08px;color:#c0c0c0;">ASCII "CW-8610-CRACKED"</span>
<span class="t" style="left:723.40px;top:587.34px;color:#c0c0c0;">0018F8F8</span>
<span class="t" style="left:784.70px;top:587.34px;color:#c0c0c0;">0042FBB8</span>
<span class="t" style="left:839.00px;top:587.34px;color:#c0c0c0;">Acid_bur.0042FBB8</span>
<span class="t" style="left:723.40px;top:599.60px;color:#c0c0c0;">0018F8FC</span>
<span class="t" style="left:784.70px;top:599.60px;color:#c0c0c0;">0042FBAC</span>
<span class="t" style="left:839.00px;top:599.60px;color:#c0c0c0;">Acid_bur.0042FBAC</span>
<span class="t" style="left:723.40px;top:611.86px;color:#c0c0c0;">0018F900</span>
<span class="t" style="left:784.70px;top:611.86px;color:#c0c0c0;">0018F978</span>
<div style="position:absolute;left:774.50px;top:477.00px;width:1.00px;height:146.00px;background:#808080;"></div>
<div style="position:absolute;left:835.00px;top:477.00px;width:1.00px;height:146.00px;background:#808080;"></div>
<div style="position:absolute;left:778.60px;top:616.86px;width:1.00px;height:8.00px;background:#c0c0c0;"></div>
<div style="position:absolute;left:778.60px;top:616.86px;width:5.00px;height:1.00px;background:#c0c0c0;"></div>
<div style="position:absolute;left:657.00px;top:33.00px;width:14.00px;height:396.00px;background:#f0f0f0;"></div>
<div style="position:absolute;left:705.00px;top:477.00px;width:13.00px;height:146.00px;background:#f0f0f0;"></div>
<div style="position:absolute;left:671.00px;top:33.00px;width:1.00px;height:442.00px;background:#ffffff;"></div>
<div style="position:absolute;left:718.00px;top:477.00px;width:1.00px;height:146.00px;background:#ffffff;"></div>
<div style="position:absolute;left:0.00px;top:14.00px;width:1080.00px;height:1.00px;background:#ffffff;"></div>
<div style="position:absolute;left:7.50px;top:16.00px;width:70.00px;height:14.50px;background:#ffff00;box-shadow:inset 1px 1px 0 #b0b000, 0 1px 0 #fff, 0 -1px 0 #a0a0a0"></div>
<span style="position:absolute;left:10.3px;top:16.2px;font:bold 9.400px/13px 'Liberation Sans','Noto Sans CJK SC',sans-serif;color:#ff2800;letter-spacing:1.500px">暂停</span>
<div class="b" style="left:82.50px;top:16.0px;width:13.2px;height:13.0px;"><svg viewBox="0 0 13.2 13.0" width="13.2" height="13.0" style="position:absolute;left:0;top:0;overflow:visible"><path d="M0.800 5.200h3.600l.9 1.100h6.200v5.700H0.800z" fill="#e6bc38" stroke="#8a6a10" stroke-width=".6"/><path d="M0.800 12l1.500-4.300h10.200L11.200 12z" fill="#fff2a8" stroke="#9a7a18" stroke-width=".6"/><path d="M3.800 2.400c2.200-1.800 5.400-1.200 6.800 2.200l-2.300 1c-.8-1.900-2.400-2.600-4.500-2.200z" fill="#10902a"/><path d="M0.800 1.800l3.200 1.300-2.600 1.700z" fill="#e01818"/></svg></div>
<div class="b" style="left:97.80px;top:16.0px;width:13.2px;height:13.0px;"><svg viewBox="0 0 13.2 13.0" width="13.2" height="13.0" style="position:absolute;left:0;top:0;overflow:visible"><path d="M6.400 2.600v7.800L1.700 6.500zM11.300 2.600v7.800L6.600 6.500z" fill="#000"/></svg></div>
<div class="b" style="left:113.10px;top:16.0px;width:13.2px;height:13.0px;"><svg viewBox="0 0 13.2 13.0" width="13.2" height="13.0" style="position:absolute;left:0;top:0;overflow:visible"><path d="M3.300 3.200l6.400 6.400M9.700 3.200l-6.400 6.400" stroke="#000" stroke-width="1.600" fill="none"/></svg></div>
<div class="b" style="left:138.00px;top:16.0px;width:13.2px;height:13.0px;"><svg viewBox="0 0 13.2 13.0" width="13.2" height="13.0" style="position:absolute;left:0;top:0;overflow:visible"><path d="M4.200 2v9l5.600-4.500z" fill="#b40000"/></svg></div>
<div class="b" style="left:153.30px;top:16.0px;width:13.2px;height:13.0px;"><svg viewBox="0 0 13.2 13.0" width="13.2" height="13.0" style="position:absolute;left:0;top:0;overflow:visible"><path d="M4 2.200h1.700v8.600H4zM7.800 2.200h1.700v8.600H7.800z" fill="#b40000"/></svg></div>
<div class="b" style="left:177.00px;top:16.0px;width:13.2px;height:13.0px;"><svg viewBox="0 0 13.2 13.0" width="13.2" height="13.0" style="position:absolute;left:0;top:0;overflow:visible"><path d="M1.700 1.800h1.800v4.800h2.200V5l2.700 2.500-2.700 2.500V8.400H1.700z" fill="#b40000"/><rect x="9.4" y="1.0" width="2.1" height="2.1" fill="#b40000"/><rect x="9.4" y="3.9" width="2.1" height="2.1" fill="#b40000"/><rect x="9.4" y="6.8" width="2.1" height="2.1" fill="#b40000"/><rect x="9.4" y="9.7" width="2.1" height="2.1" fill="#b40000"/></svg></div>
<div class="b" style="left:192.30px;top:16.0px;width:13.2px;height:13.0px;"><svg viewBox="0 0 13.2 13.0" width="13.2" height="13.0" style="position:absolute;left:0;top:0;overflow:visible"><path d="M4.300 1.600h1.800v3h1.600L5.200 7.800 2.700 4.600h1.600z" fill="#b40000"/><rect x="9.1" y="1.0" width="2.1" height="2.1" fill="#b40000"/><rect x="9.1" y="3.9" width="2.1" height="2.1" fill="#b40000"/><rect x="9.1" y="6.8" width="2.1" height="2.1" fill="#b40000"/><rect x="9.1" y="9.7" width="2.1" height="2.1" fill="#b40000"/></svg></div>
<div class="b" style="left:212.50px;top:16.0px;width:13.2px;height:13.0px;"><svg viewBox="0 0 13.2 13.0" width="13.2" height="13.0" style="position:absolute;left:0;top:0;overflow:visible"><path d="M2.300 1.400h2.700q1.600 0 1.600 1.500v.9h1.300L5.700 6.300 3.500 3.800h1.300v-.7H2.300zM4.400 6.800h1.800v1.900h1.500L5.300 11.700 2.900 8.700h1.500z" fill="#b40000"/><rect x="8.9" y="1.0" width="2.1" height="2.1" fill="#b40000"/><rect x="8.9" y="3.9" width="2.1" height="2.1" fill="#b40000"/><rect x="8.9" y="6.8" width="2.1" height="2.1" fill="#b40000"/><rect x="8.9" y="9.7" width="2.1" height="2.1" fill="#b40000"/></svg></div>
<div class="b" style="left:227.80px;top:16.0px;width:13.2px;height:13.0px;"><svg viewBox="0 0 13.2 13.0" width="13.2" height="13.0" style="position:absolute;left:0;top:0;overflow:visible"><path d="M4.200 1.200h1.800v6.600h1.600L5.100 11.500 2.600 7.800h1.600z" fill="#b40000"/><rect x="9.2" y="1.0" width="2.1" height="2.1" fill="#b40000"/><rect x="9.2" y="3.9" width="2.1" height="2.1" fill="#b40000"/><rect x="9.2" y="6.8" width="2.1" height="2.1" fill="#b40000"/><rect x="9.2" y="9.7" width="2.1" height="2.1" fill="#b40000"/></svg></div>
<div class="b" style="left:248.00px;top:16.0px;width:13.2px;height:13.0px;"><svg viewBox="0 0 13.2 13.0" width="13.2" height="13.0" style="position:absolute;left:0;top:0;overflow:visible"><path d="M1.600 5.600h2.700V4l2.700 2.500L4.300 9V7.400H1.600zM8.400 1.400h1.800v8.200q0 1.800-1.800 1.800H6.200V9.800h1.800q.4 0 .4-.4z" fill="#b40000"/></svg></div>
<div class="b" style="left:272.00px;top:16.0px;width:13.2px;height:13.0px;"><svg viewBox="0 0 13.2 13.0" width="13.2" height="13.0" style="position:absolute;left:0;top:0;overflow:visible"><path d="M1.600 5.700h3.800V4.100l3 2.400-3 2.400V7.300H1.600z" fill="#000"/><rect x="9.4" y="1.0" width="2.1" height="2.1" fill="#000"/><rect x="9.4" y="3.9" width="2.1" height="2.1" fill="#000"/><rect x="9.4" y="6.8" width="2.1" height="2.1" fill="#000"/><rect x="9.4" y="9.7" width="2.1" height="2.1" fill="#000"/></svg></div>
<div class="b" style="left:297.00px;top:16.0px;width:13.2px;height:13.0px;"><span style="position:absolute;left:0;top:-0.400px;width:13.2px;text-align:center;font:13.600px/14px 'Liberation Serif',serif;color:#101030">l</span></div>
<div class="b" style="left:312.32px;top:16.0px;width:13.2px;height:13.0px;"><span style="position:absolute;left:0;top:-0.400px;width:13.2px;text-align:center;font:13.600px/14px 'Liberation Serif',serif;color:#101030">e</span></div>
<div class="b" style="left:327.64px;top:16.0px;width:13.2px;height:13.0px;"><span style="position:absolute;left:0;top:-0.400px;width:13.2px;text-align:center;font:13.600px/14px 'Liberation Serif',serif;color:#101030">m</span></div>
<div class="b" style="left:342.96px;top:16.0px;width:13.2px;height:13.0px;"><span style="position:absolute;left:0;top:-0.400px;width:13.2px;text-align:center;font:13.600px/14px 'Liberation Serif',serif;color:#101030">t</span></div>
<div class="b" style="left:358.28px;top:16.0px;width:13.2px;height:13.0px;"><span style="position:absolute;left:0;top:-0.400px;width:13.2px;text-align:center;font:13.600px/14px 'Liberation Serif',serif;color:#101030">w</span></div>
<div class="b" style="left:373.60px;top:16.0px;width:13.2px;height:13.0px;"><span style="position:absolute;left:0;top:-0.400px;width:13.2px;text-align:center;font:13.600px/14px 'Liberation Serif',serif;color:#101030">h</span></div>
<div class="b" style="left:388.92px;top:16.0px;width:13.2px;height:13.0px;"><span style="position:absolute;left:0;top:-0.400px;width:13.2px;text-align:center;font:13.600px/14px 'Liberation Serif',serif;color:#101030">c</span></div>
<div class="b" style="left:404.24px;top:16.0px;width:13.2px;height:13.0px;"><span style="position:absolute;left:0;top:-0.400px;width:13.2px;text-align:center;font:13.600px/14px 'Liberation Serif',serif;color:#101030">P</span></div>
<div class="b" style="left:419.56px;top:16.0px;width:13.2px;height:13.0px;"><span style="position:absolute;left:0;top:-0.400px;width:13.2px;text-align:center;font:13.600px/14px 'Liberation Serif',serif;color:#101030">k</span></div>
<div class="b" style="left:434.88px;top:16.0px;width:13.2px;height:13.0px;"><span style="position:absolute;left:0;top:-0.400px;width:13.2px;text-align:center;font:13.600px/14px 'Liberation Serif',serif;color:#101030">b</span></div>
<div class="b" style="left:450.20px;top:16.0px;width:13.2px;height:13.0px;"><span style="position:absolute;left:0;top:-0.400px;width:13.2px;text-align:center;font:13.600px/14px 'Liberation Serif',serif;color:#101030">r</span></div>
<div class="b" style="left:465.52px;top:16.0px;width:13.2px;height:13.0px;"><span style="position:absolute;left:0;top:-0.400px;width:13.2px;text-align:center;font:13.600px/14px 'Liberation Serif',serif;color:#101030">...</span></div>
<div class="b" style="left:480.84px;top:16.0px;width:13.2px;height:13.0px;"><span style="position:absolute;left:0;top:-0.400px;width:13.2px;text-align:center;font:13.600px/14px 'Liberation Serif',serif;color:#101030">s</span></div>
<div class="b" style="left:505.00px;top:16.0px;width:13.2px;height:13.0px;"><svg viewBox="0 0 13.2 13.0" width="13.2" height="13.0" style="position:absolute;left:0;top:0;overflow:visible"><path d="M1.600 2h2v2h-2zM5 2.200h6.600v1.500H5zM1.600 5.500h2v2h-2zM5 5.700h6.600v1.500H5zM1.600 9h2v2h-2zM5 9.200h6.600v1.500H5z" fill="#000"/></svg></div>
<div class="b" style="left:520.30px;top:16.0px;width:13.2px;height:13.0px;"><svg viewBox="0 0 13.2 13.0" width="13.2" height="13.0" style="position:absolute;left:0;top:0;overflow:visible"><rect x="1.500" y="1.500" width="10.600" height="10" fill="#fff"/><path d="M1 12V1h11.500" fill="none" stroke="#606060" stroke-width="1"/><path d="M3.200 2.800h2.400v2.400H3.200zM8.200 2.800h2.400v2.400H8.200zM3.200 8h2.400v2.400H3.200zM8.200 8h2.400v2.400H8.200zM5.500 5.200h2.800v2.800H5.500z" fill="#a000a0"/><path d="M4.400 4l5 5.200M9.400 4l-5 5.200" stroke="#a000a0" stroke-width="1.300"/></svg></div>
<div class="b" style="left:535.60px;top:16.0px;width:13.2px;height:13.0px;"><span style="position:absolute;left:0;top:-0.700px;width:13.2px;text-align:center;font:bold 13.500px/14px 'Liberation Serif',serif;color:#b00000">?</span></div>
<div class="i" style="left:625.20px;top:16.5px;width:12.2px;height:12.0px;background:linear-gradient(#48b0f4,#1c78d8 55%,#0a54aa);"><svg viewBox="0 0 12.2 12.0" width="12.2" height="12.0" style="position:absolute;left:0;top:0"><path d="M2.600 3h4.200V1.900l3 2-3 2V4.700H2.600zM9.600 7.600H5.400V6.500l-3 2 3 2V9.300h4.200z" fill="#fff"/></svg></div>
<div class="i" style="left:640.50px;top:16.5px;width:12.2px;height:12.0px;background:linear-gradient(#98d030,#6cae08 60%,#5a9800);"><svg viewBox="0 0 12.2 12.0" width="12.2" height="12.0" style="position:absolute;left:0;top:0"><path d="M2.900 10V5.200H1.700L3.800 2.200l2.100 3H4.700V10zM7.500 2.200V7H6.300l2.100 3 2.100-3H9.300V2.200z" fill="#fff"/></svg></div>
<div class="i" style="left:655.80px;top:16.5px;width:12.2px;height:12.0px;background:linear-gradient(#ff489c,#f4147a 60%,#e00868);"><svg viewBox="0 0 12.2 12.0" width="12.2" height="12.0" style="position:absolute;left:0;top:0"><path d="M3.200 9.800L5 2.800h2.200l1.800 7H7.300L7 8.300H5.200l-.3 1.500zM5.500 6.900h1.200L6.100 4.300z" fill="#fff"/></svg></div>
<div class="i" style="left:671.10px;top:16.5px;width:12.2px;height:12.0px;background:linear-gradient(#fad048,#f6b028 60%,#f0a020);"><svg viewBox="0 0 12.2 12.0" width="12.2" height="12.0" style="position:absolute;left:0;top:0"><circle cx="6.100" cy="6" r="4.100" fill="#a82810"/><circle cx="6.100" cy="6" r="3" fill="#ff2020"/></svg></div>
<div class="i" style="left:686.40px;top:16.5px;width:12.2px;height:12.0px;background:linear-gradient(#b02444,#8c1430 60%,#740c22);"><svg viewBox="0 0 12.2 12.0" width="12.2" height="12.0" style="position:absolute;left:0;top:0"><circle cx="6.100" cy="6" r="4.300" fill="none" stroke="#f4dce0" stroke-width="1"/><circle cx="6.100" cy="6" r="2.400" fill="none" stroke="#f4dce0" stroke-width=".9"/><circle cx="6.100" cy="6" r=".9" fill="#f4dce0"/></svg></div>
<div class="i" style="left:701.70px;top:16.5px;width:12.2px;height:12.0px;background:#343a22;"><span style="position:absolute;left:0;top:0.6px;width:12.2px;text-align:center;font:bold 5.600px/5.400px 'Liberation Sans',sans-serif;color:#84d430;letter-spacing:0.2px">010<br>101</span></div>
<div class="i" style="left:717.00px;top:16.5px;width:12.2px;height:12.0px;background:linear-gradient(#48e848,#18c018 60%,#0ca80c);"><svg viewBox="0 0 12.2 12.0" width="12.2" height="12.0" style="position:absolute;left:0;top:0"><path d="M3 2.400h6.400v6H3z" fill="none" stroke="#0c6a0c" stroke-width="1"/><path d="M2.200 9.900h8" stroke="#0c6a0c" stroke-width="1.100"/><path d="M7.200 2.400v6" stroke="#0c6a0c" stroke-width=".8"/></svg></div>
<div class="i" style="left:732.30px;top:16.5px;width:12.2px;height:12.0px;background:#8a0606;border-radius:0.5px"><span style="position:absolute;left:0;top:-0.8px;width:12.2px;text-align:center;font:bold 9.600px/13px 'Liberation Sans','Noto Sans CJK SC',sans-serif;color:#fff">吾</span></div>
<div class="i" style="left:747.62px;top:16.5px;width:12.2px;height:12.0px;background:#8a0606;border-radius:0.5px"><span style="position:absolute;left:0;top:-0.8px;width:12.2px;text-align:center;font:bold 9.600px/13px 'Liberation Sans','Noto Sans CJK SC',sans-serif;color:#fff">爱</span></div>
<div class="i" style="left:762.94px;top:16.5px;width:12.2px;height:12.0px;background:#8a0606;border-radius:0.5px"><span style="position:absolute;left:0;top:-0.8px;width:12.2px;text-align:center;font:bold 9.600px/13px 'Liberation Sans','Noto Sans CJK SC',sans-serif;color:#fff">破</span></div>
<div class="i" style="left:778.26px;top:16.5px;width:12.2px;height:12.0px;background:#8a0606;border-radius:0.5px"><span style="position:absolute;left:0;top:-0.8px;width:12.2px;text-align:center;font:bold 9.600px/13px 'Liberation Sans','Noto Sans CJK SC',sans-serif;color:#fff">解</span></div>
<div class="i" style="left:793.60px;top:16.5px;width:12.2px;height:12.0px;background:#000;border-radius:0"></div>
<div style="position:absolute;left:658.30px;top:402.20px;width:11.00px;height:10.30px;background:#f4f4f4;border:1px solid #a8a8a8;border-radius:1.5px;box-sizing:border-box;background:linear-gradient(90deg,#f4f4f4,#e8e8e8 45%,#cfcfcf)"></div>
<span style="position:absolute;left:837px;top:561.5px;font:500 30px/38px 'Liberation Sans','Noto Sans CJK SC',sans-serif;letter-spacing:-0.8px;color:rgba(255,255,255,0.55);white-space:pre">公众号</span>
<span style="position:absolute;left:931px;top:553px;font:500 28px/38px 'Liberation Sans','Noto Sans CJK SC',sans-serif;color:rgba(255,255,255,0.55);white-space:pre">·</span>
<span style="position:absolute;left:961px;top:562.5px;font:31px/36px 'Liberation Sans',sans-serif;color:rgba(255,255,255,0.55);white-space:pre">it0365</span>
<svg width="1080" height="623" viewBox="0 0 1080 623" style="position:absolute;left:0;top:0;pointer-events:none"><polygon points="661.5,41.5 667.5,41.5 664.5,38.5" fill="#505050"/><polygon points="661.5,421.3 667.5,421.3 664.5,424.3" fill="#505050"/><polygon points="708.5,485.0 714.5,485.0 711.5,482.0" fill="#505050"/><line x1="931.6" y1="81.0" x2="903.7" y2="62.8" stroke="#d00000" stroke-width="1.0"/><polygon points="897.0,58.4 905.1,60.6 902.3,65.0" fill="#e00000"/><line x1="912.6" y1="110.9" x2="889.0" y2="89.7" stroke="#d00000" stroke-width="1.0"/><polygon points="883.1,84.3 890.8,87.7 887.3,91.6" fill="#e00000"/><line x1="1014.6" y1="601.9" x2="994.8" y2="584.4" stroke="#d00000" stroke-width="1.0"/><polygon points="989.5,579.8 996.2,582.8 993.3,586.1" fill="#e00000"/><g fill="#ffffff" fill-opacity="0.55"><path d="M799.3 563.1c-7.2 0-13 5.1-13 11.4 0 3.500 1.800 6.600 4.600 8.700l-1.400 4.300 4.900-2.600c1.500.5 3.200.8 4.900.8.300 0 .6 0 .9-.03a11 10.300 0 0 1 11.800-11.400c-1-6.300-6.600-11.200-12.700-11.200z"/><path d="M815 574.700c-6.400 0-11.600 4.700-11.600 10.500s5.200 10.500 11.600 10.500c1.400 0 2.800-.2 4-.6l4.200 2.300-1.200-3.800c2.800-1.900 4.600-5 4.600-8.400 0-5.800-5.200-10.500-11.600-10.500z"/></g></svg>
<div style="position:absolute;left:0.00px;top:475.00px;width:719.00px;height:1.00px;background:#e4e4e4;"></div>
<div style="position:absolute;left:0.00px;top:476.00px;width:719.00px;height:1.00px;background:#d0d0d0;"></div>
<div style="position:absolute;left:719.00px;top:475.00px;width:361.00px;height:2.00px;background:#b8b8b8;"></div>
<div style="position:absolute;left:0.00px;top:30.00px;width:1080.00px;height:1.00px;background:#d2d2d2;"></div>
<div style="position:absolute;left:0.00px;top:31.00px;width:1080.00px;height:1.00px;background:#b0b0b0;"></div>
<div style="position:absolute;left:0.00px;top:32.00px;width:672.00px;height:1.00px;background:#a8a8a8;"></div>
<div style="position:absolute;left:7.00px;top:33.00px;width:665.00px;height:1.00px;background:#505050;"></div>
<div style="position:absolute;left:672.00px;top:32.00px;width:408.00px;height:2.00px;background:#dcdcdc;"></div>
<div style="position:absolute;left:1078.00px;top:0.00px;width:2.00px;height:13.00px;background:#eef2fa;border-left:1px solid #b8c0d0"></div>
<div style="position:absolute;left:7.00px;top:34.00px;width:1.00px;height:395.00px;background:#000;"></div>
<div style="position:absolute;left:7.00px;top:431.00px;width:1.00px;height:44.00px;background:#000;"></div>
<div style="position:absolute;left:7.00px;top:491.00px;width:1.00px;height:132.00px;background:#000;"></div>
<div style="position:absolute;left:7.00px;top:477.00px;width:1.00px;height:14.00px;background:#c0c0c0;"></div>
<div style="position:absolute;left:11.2px;top:-1px;width:12.6px;height:12.6px;border-radius:1.5px;background:linear-gradient(#7fd0f2 0,#4ab4e6 45%,#2a9ad6 100%);box-shadow:inset 0 0 0 0.8px #2278a8;overflow:hidden"><span style="position:absolute;left:0;top:0.6px;width:12.6px;text-align:center;font:bold 9.500px/12px 'Liberation Serif',serif;color:#12354f">C</span></div>
<div style="position:absolute;left:0;top:0;width:6px;height:623px;background:linear-gradient(90deg,#5a5f68 0,#8d99ab 0.9px,#bcd0ea 1.8px,#d3e3f8 2.6px,#d6e6fa 4.6px,#f4f8fd 5.2px,#ffffff 6px)"></div>
</div>
</body></html>
